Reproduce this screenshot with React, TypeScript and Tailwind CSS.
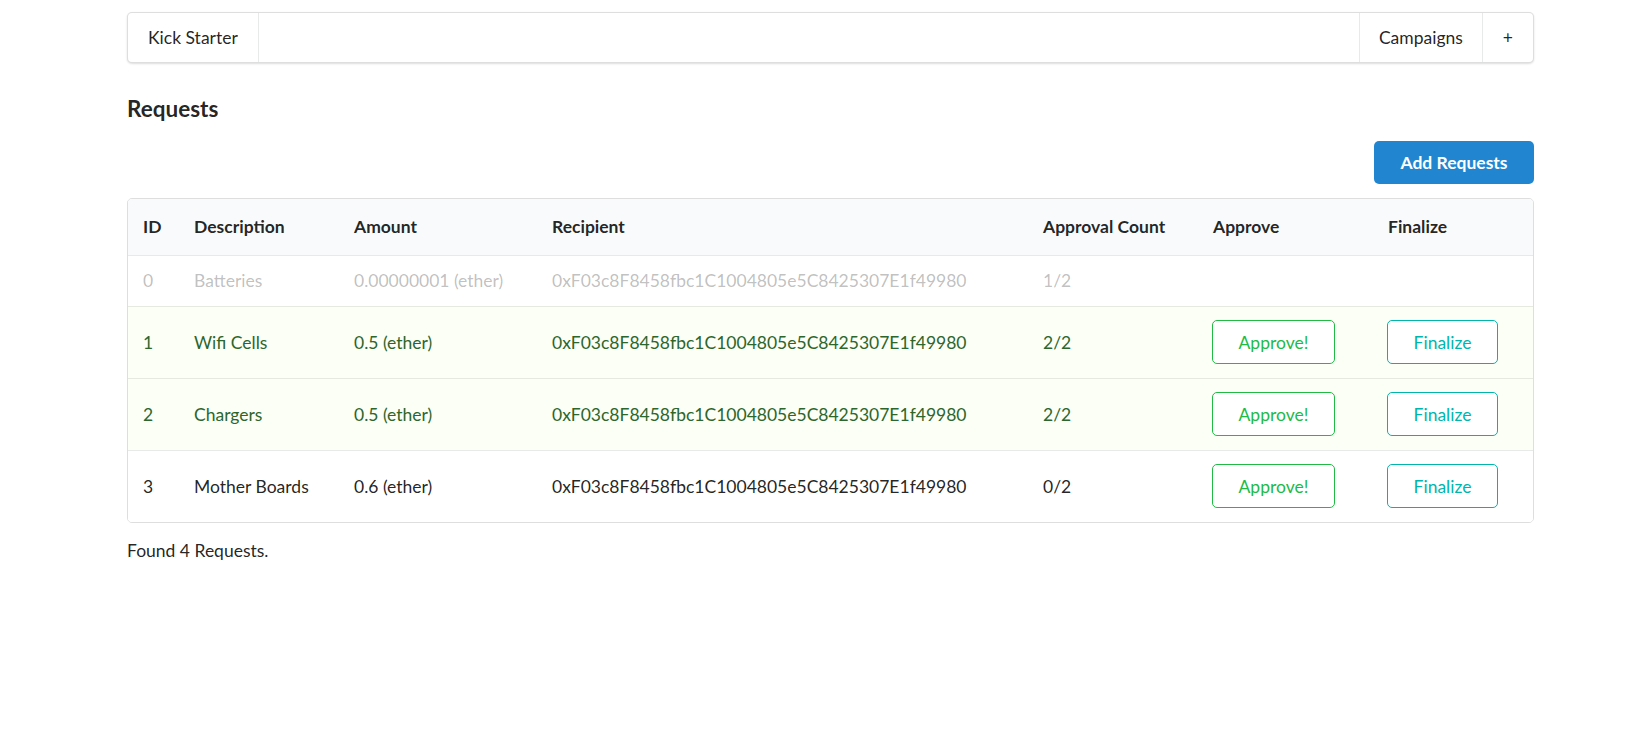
import React from "react";

const ADDR = "0xF03c8F8458fbc1C1004805e5C8425307E1f49980";

type Row = {
  id: number;
  desc: string;
  amount: string;
  count: string;
  state: "disabled" | "positive" | "normal";
};

const rows: Row[] = [
  { id: 0, desc: "Batteries", amount: "0.00000001 (ether)", count: "1/2", state: "disabled" },
  { id: 1, desc: "Wifi Cells", amount: "0.5 (ether)", count: "2/2", state: "positive" },
  { id: 2, desc: "Chargers", amount: "0.5 (ether)", count: "2/2", state: "positive" },
  { id: 3, desc: "Mother Boards", amount: "0.6 (ether)", count: "0/2", state: "normal" },
];

export default function App() {
  return (
    <div
      className="min-h-[733px] bg-white text-[17.5px] leading-[25px] text-[rgba(0,0,0,0.87)]"
      style={{ fontFamily: "Lato, 'Helvetica Neue', Arial, sans-serif" }}
    >
      <div className="ml-[127px] w-[1407px] pt-[12px]">
        {/* Menu */}
        <div className="flex h-[51px] items-stretch rounded-[5px] border border-[rgba(34,36,38,0.15)] bg-white shadow-[0_1px_2px_0_rgba(34,36,38,0.15)]">
          <div className="flex items-center border-r border-[rgba(34,36,38,0.1)] px-[20px]">Kick Starter</div>
          <div className="flex-1" />
          <div className="flex items-center border-l border-[rgba(34,36,38,0.1)] px-[19px]">Campaigns</div>
          <div className="flex items-center border-l border-[rgba(34,36,38,0.1)] px-[20px]">+</div>
        </div>

        {/* Header */}
        <h3 className="mt-[31px] text-[22.5px] font-bold leading-[29px] text-[rgba(0,0,0,0.87)]">Requests</h3>

        <div className="mt-[18px] flex justify-end">
          <button className="h-[43px] w-[160px] rounded-[5px] bg-[#2185d0] text-[17.5px] font-bold text-white">
            Add Requests
          </button>
        </div>

        {/* Table */}
        <div className="mt-[14px] overflow-hidden rounded-[5px] border border-[rgba(34,36,38,0.15)]">
          <table className="w-full table-fixed border-collapse text-left">
            <colgroup>
              <col className="w-[51px]" />
              <col className="w-[160px]" />
              <col className="w-[198px]" />
              <col className="w-[491px]" />
              <col className="w-[170px]" />
              <col className="w-[175px]" />
              <col />
            </colgroup>
            <thead>
              <tr className="h-[56px] bg-[#f9fafb]">
                {["ID", "Description", "Amount", "Recipient", "Approval Count", "Approve", "Finalize"].map((h) => (
                  <th key={h} className="pl-[15px] pr-[14px] align-middle font-bold text-[rgba(0,0,0,0.87)]">
                    {h}
                  </th>
                ))}
              </tr>
            </thead>
            <tbody>
              {rows.map((r) => {
                const rowCls =
                  r.state === "disabled"
                    ? "h-[51px] text-[rgba(40,40,40,0.3)] bg-white"
                    : r.state === "positive"
                    ? "h-[72px] bg-[#fcfff5] text-[#2c662d]"
                    : "h-[72px] bg-white text-[rgba(0,0,0,0.87)]";
                return (
                  <tr key={r.id} className={`${rowCls} border-t border-[rgba(34,36,38,0.1)]`}>
                    <td className="pl-[15px] pr-[14px] align-middle">{r.id}</td>
                    <td className="pl-[15px] pr-[14px] align-middle">{r.desc}</td>
                    <td className="pl-[15px] pr-[14px] align-middle">{r.amount}</td>
                    <td className="pl-[15px] pr-[14px] align-middle">{ADDR}</td>
                    <td className="pl-[15px] pr-[14px] align-middle">{r.count}</td>
                    <td className="pl-[14px] pr-[14px] align-middle">
                      {r.state !== "disabled" && (
                        <button className="h-[44px] w-[123px] rounded-[5px] border border-[#21ba45] bg-white text-[17.5px] text-[#21ba45]">
                          Approve!
                        </button>
                      )}
                    </td>
                    <td className="pl-[14px] pr-[14px] align-middle">
                      {r.state !== "disabled" && (
                        <button className="h-[44px] w-[111px] rounded-[5px] border border-[#00b5ad] bg-white text-[17.5px] text-[#00b5ad]">
                          Finalize
                        </button>
                      )}
                    </td>
                  </tr>
                );
              })}
            </tbody>
          </table>
        </div>

        <div className="mt-[15px]">Found 4 Requests.</div>
      </div>
    </div>
  );
}
